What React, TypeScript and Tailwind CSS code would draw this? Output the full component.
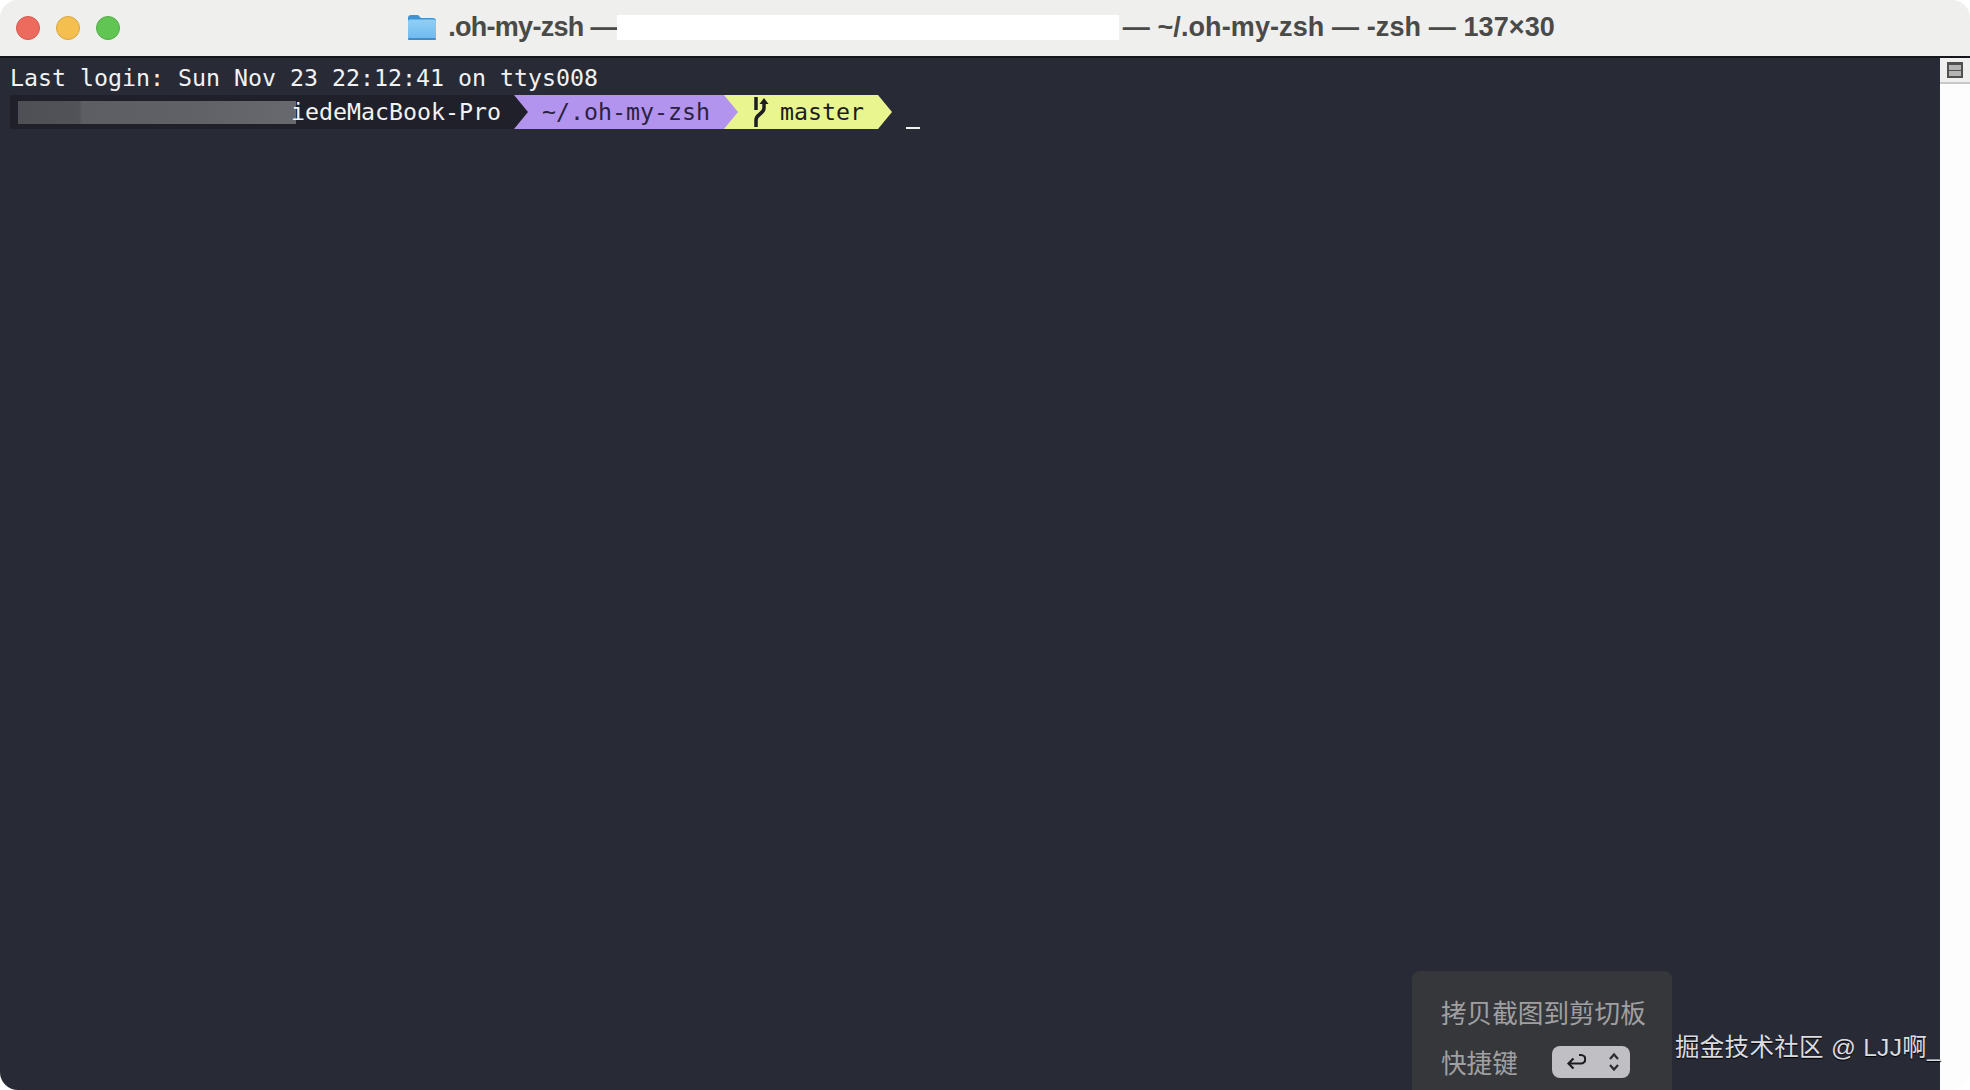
import { ReactNode } from 'react';

const mono = "font-['DejaVu_Sans_Mono','Liberation_Mono',monospace] text-[23.25px] leading-[34px]";
const cjk = "font-['Liberation_Sans','Noto_Sans_CJK_SC',sans-serif]";

function FolderIcon() {
  return (
    <svg width="30" height="28" viewBox="0 0 30 28" className="shrink-0">
      <defs>
        <linearGradient id="folderBody" x1="0" y1="0" x2="0" y2="1">
          <stop offset="0" stopColor="#8fd0f8" />
          <stop offset="1" stopColor="#6db8ee" />
        </linearGradient>
      </defs>
      <path d="M1 5a3 3 0 0 1 3-3h7l3 3h12a3 3 0 0 1 3 3v4H1z" fill="#3f93d2" />
      <path d="M1 8.500a2 2 0 0 1 2-2h24a2 2 0 0 1 2 2V25a2 2 0 0 1-2 2H3a2 2 0 0 1-2-2z" fill="url(#folderBody)" />
      <rect x="1" y="25" width="28" height="2" rx="1" fill="#3f8cc8" />
    </svg>
  );
}

function BranchIcon() {
  return (
    <svg width="16" height="32" viewBox="0 0 16 32" className="shrink-0" fill="none" stroke="#1d1d22" strokeWidth="3.500">
      <path d="M3 1v13" />
      <path d="M3 31v-7c0-6 8-6 8-12V6" />
      <path d="M11 2l4.500 6h-9z" fill="#1d1d22" stroke="none" />
    </svg>
  );
}

function Segment({ bg, arrow, className, children }: { bg: string; arrow: string; className: string; children: ReactNode }) {
  return (
    <div className={`relative h-[34px] flex items-center shrink-0 ${bg} ${className}`}>
      {children}
      <div className={`absolute left-full top-0 z-10 h-[34px] w-[14px] [clip-path:polygon(0_0,100%_50%,0_100%)] ${arrow}`}></div>
    </div>
  );
}

export default function App() {
  return (
    <div className="h-[1090px] w-[1970px] bg-white overflow-hidden">
      <div className="h-full flex flex-col rounded-[18px] overflow-hidden">
        {/* Title bar */}
        <header className="relative h-[58px] shrink-0 bg-[#efefed] border-b-2 border-[#16171c] flex items-center justify-center pr-[8px] pb-[2px]">
          <div className="absolute left-[16px] top-[16px] flex gap-[16px]">
            <span className="h-[24px] w-[24px] rounded-full bg-[#ec6a5e] border border-[#d65a50]"></span>
            <span className="h-[24px] w-[24px] rounded-full bg-[#f4bf4f] border border-[#d9a53f]"></span>
            <span className="h-[24px] w-[24px] rounded-full bg-[#61c554] border border-[#51ad46]"></span>
          </div>
          <div className="flex items-center font-['Liberation_Sans',sans-serif] font-bold text-[27px] text-[#4a4a48] whitespace-nowrap">
            <FolderIcon />
            <span className="ml-[11px] tracking-[-0.7px]">.oh-my-zsh —</span>
            <div className="h-[25px] w-[502px] bg-white"></div>
            <span className="ml-[4px] tracking-[0.1px]">— ~/.oh-my-zsh — -zsh — 137×30</span>
          </div>
        </header>

        <div className="flex-1 flex min-h-0">
          {/* Terminal */}
          <main className={`relative flex-1 bg-[#282b36] pt-[3px] text-[#f2f2f2] ${mono}`}>
            <div className="pl-[10px] h-[34px] whitespace-pre">Last login: Sun Nov 23 22:12:41 on ttys008</div>
            <div className="flex h-[34px] pl-[10px] whitespace-pre">
              <Segment bg="bg-[#1f2029]" arrow="bg-[#1f2029]" className="w-[504px] pl-[8px]">
                <div className="h-[23px] w-[278px] shrink-0 bg-[linear-gradient(90deg,#4f5056_0%,#525359_22%,#5d5e64_23%,#606167_60%,#68696e_100%)]"></div>
                <span className="ml-[-5px]">iedeMacBook-Pro</span>
              </Segment>
              <Segment bg="bg-[#b294ee]" arrow="bg-[#b294ee]" className="w-[210px] pl-[28px] text-[#2b2140]">
                ~/.oh-my-zsh
              </Segment>
              <Segment bg="bg-[#e9f68f]" arrow="bg-[#e9f68f]" className="w-[154px] pl-[29px] text-[#1d1d22]">
                <BranchIcon />
                <span className="ml-[11px]">master</span>
              </Segment>
              <div className="ml-[28px] mt-[32px] h-[2px] w-[14px] bg-[#f2f2f2]"></div>
            </div>

            {/* Screenshot popover */}
            <div className={`absolute left-[1412px] top-[913px] h-[140px] w-[260px] rounded-t-[8px] bg-[#36373b] pl-[29px] pt-[25px] text-[#a0a0a2] text-[25.600px] leading-[36px] ${cjk}`}>
              <div className="whitespace-nowrap">拷贝截图到剪切板</div>
              <div className="mt-[14px] flex items-center">
                <span className="whitespace-nowrap">快捷键</span>
                <div className="ml-[34px] mt-[-4px] h-[32px] w-[78px] rounded-[8px] bg-[#c0c0c4] flex items-center justify-between pl-[14px] pr-[10px]">
                  <svg width="20" height="18" viewBox="0 0 20 18" fill="none" stroke="#1c1c20" strokeWidth="2.200">
                    <path d="M13 2h2a3.500 3.500 0 0 1 0 8.500H3" />
                    <path d="M7.500 5.500L2.500 10.500l5 5" />
                  </svg>
                  <svg width="12" height="20" viewBox="0 0 12 20" fill="none" stroke="#2c2c30" strokeWidth="2.200">
                    <path d="M2 7l4-4.500L10 7" />
                    <path d="M2 13l4 4.500 4-4.500" />
                  </svg>
                </div>
              </div>
            </div>

            {/* Watermark */}
            <div className={`absolute left-[1675px] top-[972px] whitespace-nowrap text-[24.500px] tracking-[0.3px] leading-[36px] text-[#dcdce0] [text-shadow:0_1px_1px_#000] ${cjk}`}>
              掘金技术社区 @ LJJ啊_
            </div>
          </main>

          {/* Scrollbar strip */}
          <aside className="w-[30px] shrink-0 flex flex-col bg-[#fdfdfd]">
            <div className="h-[26px] shrink-0 bg-[#efefed] border-b-2 border-[#c8c8c8] flex items-center justify-center">
              <div className="h-[16px] w-[16px] bg-[#505050] flex flex-col justify-center gap-[1px] px-[2px]">
                <div className="h-[5px] bg-[#b4b4b4]"></div>
                <div className="h-[5px] bg-[#b4b4b4]"></div>
              </div>
            </div>
          </aside>
        </div>
      </div>
    </div>
  );
}
